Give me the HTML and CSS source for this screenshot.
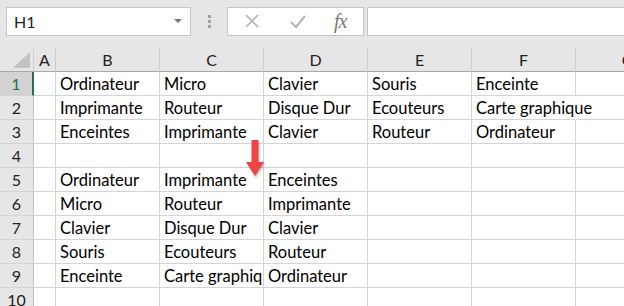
FILE: index.html
```html
<!DOCTYPE html>
<html lang="fr">
<head>
    <meta charset="UTF-8">
    <title>Classeur</title>
    <link rel="stylesheet" href="styles.css">
</head>
<body>

    <div class="toolbar">
        <div class="nameBox">
            <span>H1</span>
            <span class="dropArrow"></span>
        </div>
        <div class="grip"><i></i><i></i><i></i></div>
        <div class="fxButtons">
            <svg class="btnIcon" width="16" height="16" viewBox="0 0 16 16"><path d="M2 2 L14 14 M14 2 L2 14" stroke="#b4b4b4" stroke-width="1.6" fill="none"/></svg>
            <svg class="btnIcon" width="18" height="16" viewBox="0 0 18 16"><path d="M2 9 L7 14 L16 3" stroke="#b4b4b4" stroke-width="2" fill="none"/></svg>
            <span class="fx">fx</span>
        </div>
        <div class="formulaBox"></div>
    </div>

    <div class="sheet">
        <div class="corner"><svg width="17" height="16" viewBox="0 0 17 16"><path d="M17 0 L17 16 L0 16 Z" fill="#c3c3c3"/></svg></div>
        <div class="colHead">A</div>
        <div class="colHead">B</div>
        <div class="colHead">C</div>
        <div class="colHead">D</div>
        <div class="colHead">E</div>
        <div class="colHead">F</div>
        <div class="colHead">G</div>

        <div class="rowHead active">1</div>
        <div class="cell"></div><div class="cell">Ordinateur</div><div class="cell">Micro</div><div class="cell">Clavier</div><div class="cell">Souris</div><div class="cell">Enceinte</div><div class="cell"></div>

        <div class="rowHead">2</div>
        <div class="cell"></div><div class="cell">Imprimante</div><div class="cell">Routeur</div><div class="cell">Disque Dur</div><div class="cell">Ecouteurs</div><div class="cell spill">Carte graphique</div><div class="cell"></div>

        <div class="rowHead">3</div>
        <div class="cell"></div><div class="cell">Enceintes</div><div class="cell">Imprimante</div><div class="cell">Clavier</div><div class="cell">Routeur</div><div class="cell">Ordinateur</div><div class="cell"></div>

        <div class="rowHead">4</div>
        <div class="cell"></div><div class="cell"></div><div class="cell"></div><div class="cell"></div><div class="cell"></div><div class="cell"></div><div class="cell"></div>

        <div class="rowHead">5</div>
        <div class="cell"></div><div class="cell">Ordinateur</div><div class="cell">Imprimante</div><div class="cell">Enceintes</div><div class="cell"></div><div class="cell"></div><div class="cell"></div>

        <div class="rowHead">6</div>
        <div class="cell"></div><div class="cell">Micro</div><div class="cell">Routeur</div><div class="cell">Imprimante</div><div class="cell"></div><div class="cell"></div><div class="cell"></div>

        <div class="rowHead">7</div>
        <div class="cell"></div><div class="cell">Clavier</div><div class="cell">Disque Dur</div><div class="cell">Clavier</div><div class="cell"></div><div class="cell"></div><div class="cell"></div>

        <div class="rowHead">8</div>
        <div class="cell"></div><div class="cell">Souris</div><div class="cell">Ecouteurs</div><div class="cell">Routeur</div><div class="cell"></div><div class="cell"></div><div class="cell"></div>

        <div class="rowHead">9</div>
        <div class="cell"></div><div class="cell">Enceinte</div><div class="cell">Carte graphique</div><div class="cell">Ordinateur</div><div class="cell"></div><div class="cell"></div><div class="cell"></div>

        <div class="rowHead">10</div>
        <div class="cell"></div><div class="cell"></div><div class="cell"></div><div class="cell"></div><div class="cell"></div><div class="cell"></div><div class="cell"></div>

        <svg class="arrow" width="24" height="42" viewBox="0 0 24 42">
            <path d="M8.5 2 L15.5 2 L15.5 24 L21 24 L12 38 L3 24 L8.5 24 Z" fill="#f04343"/>
        </svg>
    </div>

</body>
</html>
```

FILE: styles.css
```css
body {
    margin: 0;
    width: 624px;
    height: 306px;
    overflow: hidden;
    background: #ffffff;
    font-family: Lato, "Open Sans", sans-serif;
    color: #000000;
}

.toolbar {
    display: flex;
    align-items: center;
    height: 48px;
    padding: 0 0 6px 6px;
    box-sizing: border-box;
    background: #e6e6e6;
}

.nameBox {
    display: flex;
    align-items: center;
    justify-content: space-between;
    width: 185px;
    height: 29px;
    box-sizing: border-box;
    padding: 0 8px 0 7px;
    background: #ffffff;
    border: 1px solid #c6c6c6;
    font-size: 16px;
    color: #222222;
}

.dropArrow {
    width: 0;
    height: 0;
    border-left: 4px solid transparent;
    border-right: 4px solid transparent;
    border-top: 4px solid #777777;
}

.grip {
    display: flex;
    flex-direction: column;
    gap: 2px;
    margin: 0 16px 0 17px;
}

.grip i {
    width: 3px;
    height: 3px;
    background: #9f9f9f;
}

.fxButtons {
    display: flex;
    align-items: center;
    width: 137px;
    height: 29px;
    box-sizing: border-box;
    padding-left: 16px;
    background: #ffffff;
    border: 1px solid #c6c6c6;
}

.btnIcon {
    margin-right: 29px;
}

.fx {
    font-family: "Liberation Serif", serif;
    font-style: italic;
    font-size: 20px;
    color: #7a7a7a;
    margin-left: -2px;
    letter-spacing: -1px;
}

.formulaBox {
    flex: 1;
    height: 29px;
    margin-left: 3px;
    box-sizing: border-box;
    background: #ffffff;
    border: 1px solid #c6c6c6;
    border-right: none;
}

.sheet {
    position: relative;
    display: grid;
    grid-template-columns: 34px 22px repeat(6, 104px);
    grid-auto-rows: 24px;
    background: #e6e6e6;
}

.corner {
    display: flex;
    align-items: flex-end;
    justify-content: flex-end;
    padding: 0 3px 3px 0;
    border-right: 1px solid #d0d0d0;
    border-bottom: 1px solid #a8a8a8;
}

.colHead {
    display: flex;
    align-items: center;
    justify-content: center;
    font-size: 16px;
    color: #222222;
    border-right: 1px solid #cdcdcd;
    border-bottom: 1px solid #a8a8a8;
}

.rowHead {
    display: flex;
    align-items: center;
    justify-content: center;
    font-size: 16px;
    color: #222222;
    border-right: 1px solid #c3c3c3;
    border-bottom: 1px solid #d4d4d4;
}

.rowHead.active {
    background: #d2d2d2;
    color: #217346;
    border-right: 2px solid #217346;
}

.cell {
    display: flex;
    align-items: flex-end;
    padding: 0 0 1px 4px;
    background: #ffffff;
    border-right: 1px solid #d4d4d4;
    border-bottom: 1px solid #d4d4d4;
    font-size: 16.5px;
    white-space: nowrap;
    overflow: hidden;
}

.cell.spill {
    overflow: visible;
    position: relative;
    z-index: 1;
    border-right-color: #ffffff;
}

.arrow {
    position: absolute;
    left: 243px;
    top: 90px;
    filter: drop-shadow(1px 2px 1px rgba(0, 0, 0, 0.25));
}
```
